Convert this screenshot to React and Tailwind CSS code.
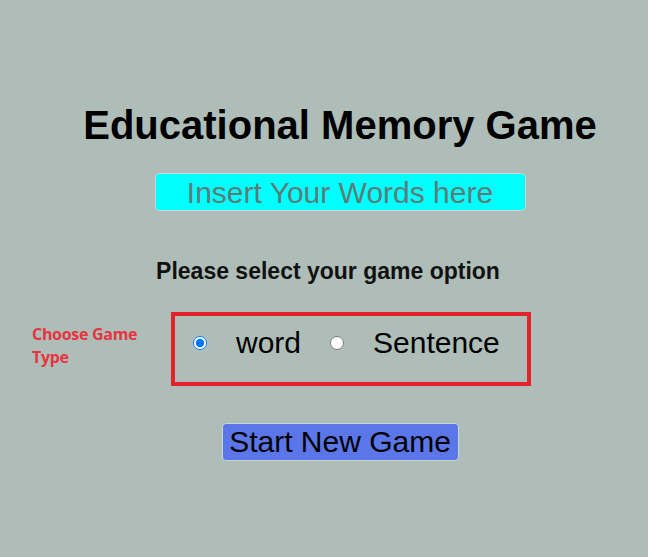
import React, { useState } from 'react';

export default function App() {
  const [gameType, setGameType] = useState('word');
  const [words, setWords] = useState('');

  return (
    <div className="min-h-[557px] w-full bg-[#aebdb7] pl-8 pt-[102px] font-[family-name:Liberation_Sans,Arial,sans-serif] text-black">
      <div className="flex flex-col items-center">
        <h1 className="text-[40px] leading-[46px] font-bold">Educational Memory Game</h1>

        <input
          value={words}
          onChange={e => setWords(e.target.value)}
          placeholder="Insert Your Words here"
          className="mt-[25px] h-[38px] w-[371px] rounded-[4px] border border-[#c9d6d2] bg-[#00ffff] text-center text-[30px] text-black outline-none placeholder:text-[#5f7b78]"
        />

        <p className="mt-[47px] mr-[24px] text-[23px] leading-[26px] font-bold text-[#111]">Please select your game option</p>

        <div className="mt-[28px] flex w-full items-start">
          <div className="w-[139px] pt-[11px] font-[family-name:Open_Sans,sans-serif] text-[16px] leading-[23px] font-bold tracking-[-0.3px] text-[#e63440]">
            Choose Game<br />Type
          </div>
          <div className="flex h-[74px] w-[360px] items-center border-4 border-[#e3222b] pl-[18px] pb-[12px]">
            <input
              type="radio"
              name="gameType"
              checked={gameType === 'word'}
              onChange={() => setGameType('word')}
              className="m-0 h-[14px] w-[14px]"
            />
            <label className="ml-[29px] text-[30px] leading-[34px]" onClick={() => setGameType('word')}>word</label>
            <input
              type="radio"
              name="gameType"
              checked={gameType === 'sentence'}
              onChange={() => setGameType('sentence')}
              className="m-0 ml-[29px] h-[14px] w-[14px]"
            />
            <label className="ml-[29px] text-[30px] leading-[34px]" onClick={() => setGameType('sentence')}>Sentence</label>
          </div>
        </div>

        <button className="mt-[37px] h-[38px] w-[237px] rounded-[4px] border border-[#c9d6d2] bg-[#5a76e8] text-[30px] leading-[34px] text-black">
          Start New Game
        </button>
      </div>
    </div>
  );
}
